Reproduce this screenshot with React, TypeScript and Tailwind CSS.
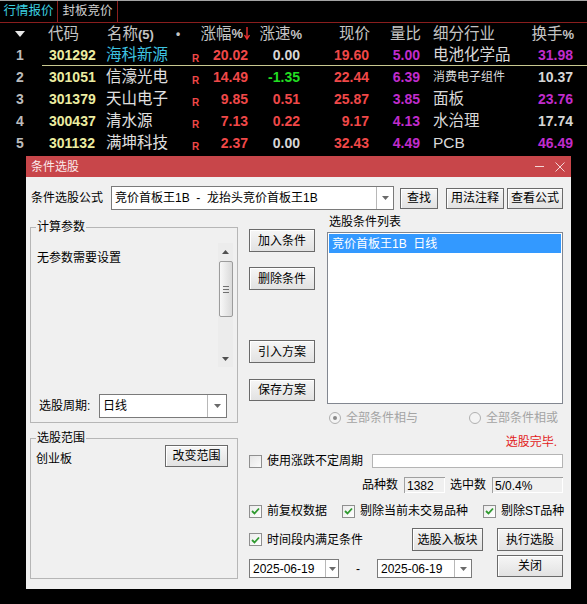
import React from 'react';

type Row = {
  n: number;
  code: string;
  name: string;
  nameCls: string;
  zf: string;
  zs: string;
  zsCls: string;
  xj: string;
  lb: string;
  hy: string;
  hyCls: string;
  hs: string;
  hsCls: string;
};

const rows: Row[] = [
  { n: 1, code: '301292', name: '海科新源', nameCls: 'text-[#3ec4e2]', zf: '20.02', zs: '0.00', zsCls: 'text-[#d6d6d6]', xj: '19.60', lb: '5.00', hy: '电池化学品', hyCls: 'text-[15.5px]', hs: '31.98', hsCls: 'text-[#c02ccc]' },
  { n: 2, code: '301051', name: '信濠光电', nameCls: 'text-[#e0e0e0]', zf: '14.49', zs: '-1.35', zsCls: 'text-[#22dd22]', xj: '22.44', lb: '6.39', hy: '消费电子组件', hyCls: 'text-[12px]', hs: '10.37', hsCls: 'text-[#d6d6d6]' },
  { n: 3, code: '301379', name: '天山电子', nameCls: 'text-[#e0e0e0]', zf: '9.85', zs: '0.51', zsCls: 'text-[#f04848]', xj: '25.87', lb: '3.85', hy: '面板', hyCls: 'text-[15.5px]', hs: '23.76', hsCls: 'text-[#c02ccc]' },
  { n: 4, code: '300437', name: '清水源', nameCls: 'text-[#e0e0e0]', zf: '7.13', zs: '0.22', zsCls: 'text-[#f04848]', xj: '9.17', lb: '4.13', hy: '水治理', hyCls: 'text-[15.5px]', hs: '17.74', hsCls: 'text-[#d6d6d6]' },
  { n: 5, code: '301132', name: '满坤科技', nameCls: 'text-[#e0e0e0]', zf: '2.37', zs: '0.00', zsCls: 'text-[#d6d6d6]', xj: '32.43', lb: '4.49', hy: 'PCB', hyCls: 'text-[15.5px]', hs: '46.49', hsCls: 'text-[#c02ccc]' },
];

function Btn({ label, className }: { label: string; className: string }) {
  return (
    <div
      className={
        'flex shrink-0 items-center justify-center border border-[#6a6a6a] bg-linear-to-b from-[#f6f6f6] to-[#e2e2e2] text-[12px] leading-none text-black shadow-[inset_1px_1px_0_#ffffff] ' +
        className
      }
    >
      {label}
    </div>
  );
}

function Check({ label }: { label: string }) {
  return (
    <div className="flex items-center">
      <div className="flex h-[13px] w-[13px] shrink-0 items-center justify-center border border-[#8f8f8f] bg-linear-to-br from-[#ececec] to-[#ffffff]">
        <svg width="9" height="8" viewBox="0 0 9 8">
          <path d="M1 4 L3.5 6.5 L8 1.5" fill="none" stroke="#2f9a2f" strokeWidth="1.8" />
        </svg>
      </div>
      <span className="ml-[5px] text-[12px] leading-[14px] text-black">{label}</span>
    </div>
  );
}

function DropArrow() {
  return (
    <svg width="7" height="4" viewBox="0 0 7 4">
      <path d="M0 0 H7 L3.5 4 Z" fill="#6a6a6a" />
    </svg>
  );
}

function Combo({ text, className, arrowW }: { text: string; className: string; arrowW: string }) {
  return (
    <div className={'flex shrink-0 border border-[#7a7a7a] bg-white ' + className}>
      <div className="flex flex-1 items-center overflow-hidden whitespace-pre pl-[3px] text-[12px] leading-none text-black">
        {text}
      </div>
      <div className={'flex items-center justify-center border-l border-[#b8b8b8] ' + arrowW}>
        <DropArrow />
      </div>
    </div>
  );
}

function Radio({ on }: { on: boolean }) {
  return (
    <div className="flex h-[12px] w-[12px] shrink-0 items-center justify-center rounded-full border border-[#b0b0b0] bg-[#f4f4f4]">
      {on && <div className="h-[4px] w-[4px] rounded-full bg-[#8a8a8a]" />}
    </div>
  );
}

export default function App() {
  const cjk = "font-['Liberation_Sans','Noto_Sans_CJK_SC',sans-serif]";
  return (
    <div className={'h-[604px] w-[587px] overflow-hidden whitespace-nowrap bg-black ' + cjk}>
      {/* tabs */}
      <div className="h-px bg-[#a4a4a4]" />
      <div className="flex h-[22px] border-b border-[#8a1e1e]">
        <div className="flex w-[58px] items-center justify-center border-r border-[#8a1e1e] text-[12.5px] text-[#3cd0e0]">
          行情报价
        </div>
        <div className="flex w-[60px] items-center justify-center border-r border-[#8a1e1e] text-[12.5px] text-[#d0d0d0]">
          封板竞价
        </div>
      </div>

      {/* header */}
      <div className="flex h-[21px] items-center text-[15.5px] leading-none text-[#c4c4c4]">
        <div className="flex w-[42px] shrink-0 justify-start pl-[15px]">
          <svg width="10" height="6" viewBox="0 0 10 6">
            <path d="M0 0 H10 L5 6 Z" fill="#e6e6e6" />
          </svg>
        </div>
        <div className="w-[58px] shrink-0 pl-[6px]">代码</div>
        <div className="w-[72px] shrink-0 pl-[7px]">
          名称<span className="text-[13px] font-bold">(5)</span>
        </div>
        <div className="w-[27px] shrink-0 pl-[4px] text-[12px] font-bold">•</div>
        <div className="flex w-[51px] shrink-0 items-center justify-end">
          涨幅<span className="text-[13px] font-bold">%</span>
          <svg width="6" height="13" viewBox="0 0 6 13" className="ml-[1px] shrink-0">
            <path d="M3 0 V11 M0.5 8 L3 12 L5.5 8" fill="none" stroke="#e83030" strokeWidth="1.4" />
          </svg>
        </div>
        <div className="w-[52px] shrink-0 text-right">
          涨速<span className="text-[13px] font-bold">%</span>
        </div>
        <div className="w-[68px] shrink-0 text-right">现价</div>
        <div className="w-[51px] shrink-0 text-right">量比</div>
        <div className="w-[92px] shrink-0 pl-[12px]">细分行业</div>
        <div className="w-[61px] shrink-0 text-right">
          换手<span className="text-[13px] font-bold">%</span>
        </div>
      </div>

      {/* rows */}
      {rows.map((r) => (
        <div key={r.n}>
          <div className={'flex items-center leading-none ' + (r.n === 1 ? 'h-[21px]' : 'h-[22px]')}>
            <div className="w-[42px] shrink-0 pl-[16px] text-[14px] font-bold text-[#bcbcbc]">{r.n}</div>
            <div className="w-[58px] shrink-0 pl-[7px] text-[14px] font-bold text-[#ececa0]">{r.code}</div>
            <div className={'w-[72px] shrink-0 pl-[6px] text-[15.5px] ' + r.nameCls}>{r.name}</div>
            <div className="w-[28px] shrink-0 pl-[20px] pt-[8px] text-[10px] font-bold text-[#f04848]">R</div>
            <div className="w-[48px] shrink-0 text-right text-[14px] font-bold text-[#f04848]">{r.zf}</div>
            <div className={'w-[52px] shrink-0 text-right text-[14px] font-bold ' + r.zsCls}>{r.zs}</div>
            <div className="w-[69px] shrink-0 text-right text-[14px] font-bold text-[#f04848]">{r.xj}</div>
            <div className="w-[51px] shrink-0 text-right text-[14px] font-bold text-[#c02ccc]">{r.lb}</div>
            <div className={'w-[92px] shrink-0 pl-[13px] text-[#d8d8d8] ' + r.hyCls}>{r.hy}</div>
            <div className={'w-[61px] shrink-0 text-right text-[14px] font-bold ' + r.hsCls}>{r.hs}</div>
          </div>
          {r.n === 1 && <div className="ml-[42px] h-px bg-[#c8c890]" />}
        </div>
      ))}

      {/* dialog */}
      <div className="ml-[26px] mt-[2px] w-[545px]">
        <div className="flex h-[21px] items-center justify-between bg-[#c8464a] pl-[5px] pr-[6px]">
          <span className="text-[12px] leading-none text-[#fbeaea]">条件选股</span>
          <div className="flex items-center gap-[11px]">
            <svg width="9" height="9" viewBox="0 0 9 9">
              <path d="M0 4.5 H9" stroke="#f3d6d6" strokeWidth="1" />
            </svg>
            <svg width="10" height="10" viewBox="0 0 10 10">
              <path d="M0.5 0.5 L9.5 9.5 M9.5 0.5 L0.5 9.5" stroke="#f3d6d6" strokeWidth="1" />
            </svg>
          </div>
        </div>

        <div className="h-[412px] bg-[#f0f0f0] pl-[4px] pt-[9px] text-[12px] text-black">
          {/* formula row */}
          <div className="flex h-[24px] items-center">
            <div className="ml-[1px] w-[80px] shrink-0 leading-none">条件选股公式</div>
            <Combo text="竞价首板王1B  -  龙抬头竞价首板王1B" className="h-[24px] w-[283px]" arrowW="w-[17px]" />
            <Btn label="查找" className="ml-[6px] h-[21px] w-[38px]" />
            <Btn label="用法注释" className="ml-[8px] h-[21px] w-[58px]" />
            <Btn label="查看公式" className="ml-[3px] h-[21px] w-[56px]" />
          </div>

          <div className="flex">
            {/* left column */}
            <div className="w-[208px] shrink-0">
              <div className="relative mt-[17px] h-[196px] border border-[#b6b6b6]">
                <span className="absolute -top-[8px] left-[5px] bg-[#f0f0f0] px-[1px] leading-[14px]">计算参数</span>
                <div className="ml-[5px] mr-[4px] mt-[15px] flex h-[124px]">
                  <div className="flex-1 pl-[1px] pt-[8px] leading-[14px]">无参数需要设置</div>
                  <div className="flex w-[15px] flex-col items-center bg-[#ececec]">
                    <div className="flex h-[18px] items-center justify-center">
                      <svg width="7" height="4" viewBox="0 0 7 4">
                        <path d="M0 4 H7 L3.5 0 Z" fill="#505050" />
                      </svg>
                    </div>
                    <div className="flex h-[56px] w-[14px] flex-col items-center justify-center gap-[2px] rounded-[2px] border border-[#9c9c9c] bg-linear-to-r from-[#f8f8f8] to-[#dadada]">
                      <div className="h-px w-[6px] bg-[#707070]" />
                      <div className="h-px w-[6px] bg-[#707070]" />
                      <div className="h-px w-[6px] bg-[#707070]" />
                    </div>
                    <div className="flex-1" />
                    <div className="flex h-[16px] items-center justify-center">
                      <svg width="7" height="4" viewBox="0 0 7 4">
                        <path d="M0 0 H7 L3.5 4 Z" fill="#505050" />
                      </svg>
                    </div>
                  </div>
                </div>
                <div className="mt-[27px] flex items-center">
                  <div className="ml-[8px] w-[60px] leading-none">选股周期:</div>
                  <Combo text="日线" className="h-[24px] w-[128px]" arrowW="w-[19px]" />
                </div>
              </div>

              <div className="relative mt-[15px] h-[141px] border border-[#b6b6b6]">
                <span className="absolute -top-[8px] left-[5px] bg-[#f0f0f0] px-[1px] leading-[14px]">选股范围</span>
                <div className="flex justify-between">
                  <div className="ml-[5px] mt-[13px] leading-[14px]">创业板</div>
                  <Btn label="改变范围" className="mr-[9px] mt-[6px] h-[22px] w-[63px]" />
                </div>
              </div>
            </div>

            {/* right area */}
            <div className="ml-[11px] w-[314px] shrink-0">
              <div className="flex h-[194px]">
                <div className="flex w-[66px] shrink-0 flex-col">
                  <Btn label="加入条件" className="mt-[19px] h-[23px] w-[66px]" />
                  <Btn label="删除条件" className="mt-[15px] h-[23px] w-[66px]" />
                  <Btn label="引入方案" className="mt-[50px] h-[23px] w-[66px]" />
                  <Btn label="保存方案" className="mt-[16px] h-[22px] w-[66px]" />
                </div>
                <div className="ml-[12px] w-[236px]">
                  <div className="mt-[4px] h-[16px] pl-[2px] leading-[16px]">选股条件列表</div>
                  <div className="mt-[2px] h-[172px] border border-[#828790] bg-white p-[1px]">
                    <div className="flex h-[19px] items-center whitespace-pre bg-[#3399ff] pl-[3px] leading-none text-white">
                      竞价首板王1B  日线
                    </div>
                  </div>
                </div>
              </div>

              <div className="mt-[7px] flex h-[14px] items-center text-[#a4a4a4]">
                <div className="ml-[80px] flex w-[140px] items-center">
                  <Radio on />
                  <span className="ml-[5px] leading-none">全部条件相与</span>
                </div>
                <div className="flex items-center">
                  <Radio on={false} />
                  <span className="ml-[5px] leading-none">全部条件相或</span>
                </div>
              </div>

              <div className="mt-[10px] h-[14px] pr-[6px] text-right leading-[14px] text-[#e21b1b]">选股完毕.</div>

              <div className="mt-[5px] flex h-[14px] items-center">
                <div className="flex items-center">
                  <div className="h-[13px] w-[13px] border border-[#8f8f8f] bg-linear-to-br from-[#e6e6e6] to-[#fafafa]" />
                  <span className="ml-[5px] leading-[14px]">使用涨跌不定周期</span>
                </div>
                <div className="ml-auto h-[14px] w-[191px] border border-[#b4b4b4] bg-white" />
              </div>

              <div className="mt-[9px] flex h-[16px] items-center justify-end">
                <span className="leading-none">品种数</span>
                <div className="ml-[6px] flex h-[16px] w-[41px] items-center border-l border-t border-[#a0a0a0] pl-[2px] leading-none shadow-[inset_-1px_-1px_0_#ffffff]">
                  1382
                </div>
                <span className="ml-[5px] leading-none">选中数</span>
                <div className="ml-[6px] flex h-[16px] w-[71px] items-center border-l border-t border-[#a0a0a0] pl-[2px] leading-none shadow-[inset_-1px_-1px_0_#ffffff]">
                  5/0.4%
                </div>
              </div>

              <div className="mt-[11px] flex h-[14px] items-center">
                <div className="w-[93px] shrink-0">
                  <Check label="前复权数据" />
                </div>
                <div className="w-[141px] shrink-0">
                  <Check label="剔除当前未交易品种" />
                </div>
                <Check label="剔除ST品种" />
              </div>

              <div className="mt-[10px] flex h-[23px] items-center">
                <Check label="时间段内满足条件" />
                <Btn label="选股入板块" className="ml-auto h-[23px] w-[71px]" />
                <Btn label="执行选股" className="ml-[14px] h-[23px] w-[66px]" />
              </div>

              <div className="mt-[4px] flex items-start">
                <Combo text="2025-06-19" className="mt-[4px] h-[19px] w-[90px]" arrowW="w-[13px]" />
                <div className="mt-[8px] w-[38px] text-center leading-none">-</div>
                <Combo text="2025-06-19" className="mt-[4px] h-[19px] w-[95px]" arrowW="w-[17px]" />
                <Btn label="关闭" className="ml-auto h-[22px] w-[66px]" />
              </div>
            </div>
          </div>
        </div>
      </div>
    </div>
  );
}
